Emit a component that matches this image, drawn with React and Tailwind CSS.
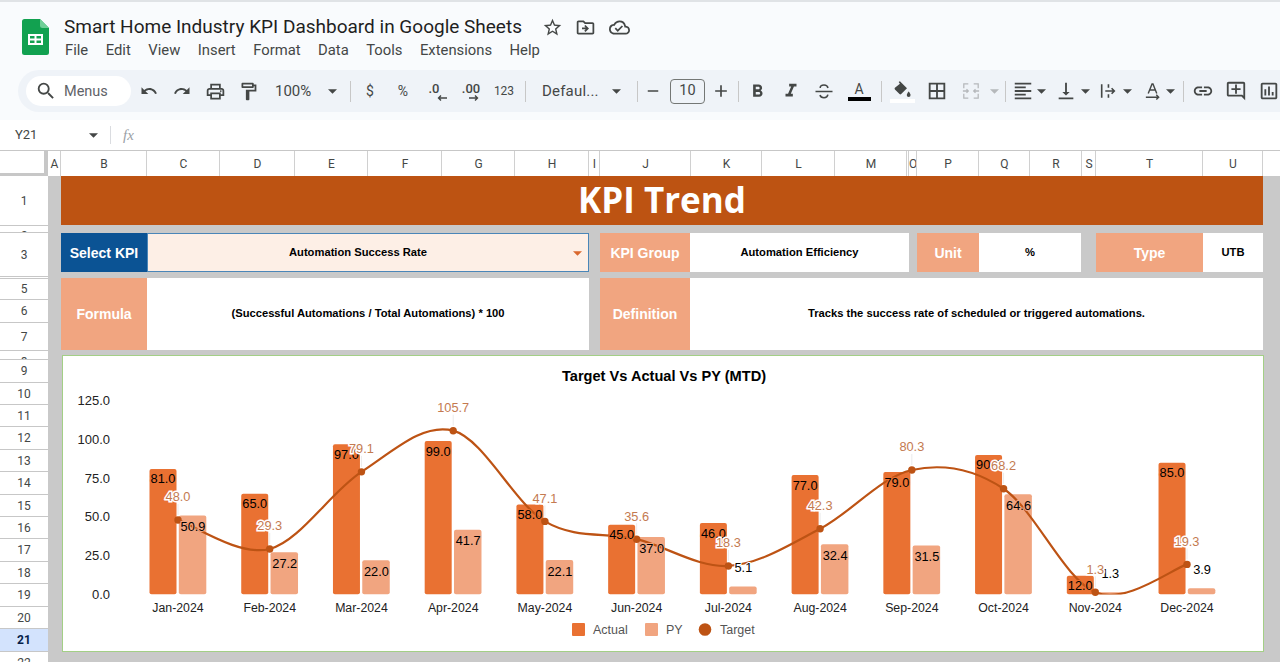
import React from 'react';
import {
  MdSearch, MdUndo, MdRedo, MdOutlineLocalPrintshop, MdOutlineFormatPaint, MdStarBorder,
  MdOutlineDriveFileMove, MdOutlineCloudDone, MdRemove, MdAdd, MdFormatBold, MdFormatItalic,
  MdBorderAll, MdFormatAlignLeft, MdVerticalAlignBottom, MdLink,
  MdOutlineAddComment, MdOutlineInsertChart,
} from 'react-icons/md';

const menus = ['File', 'Edit', 'View', 'Insert', 'Format', 'Data', 'Tools', 'Extensions', 'Help'];

const columns = [
  ['A', 'w-[13px]'], ['B', 'w-[86px]'], ['C', 'w-[73px]'], ['D', 'w-[75px]'], ['E', 'w-[73px]'],
  ['F', 'w-[74px]'], ['G', 'w-[73px]'], ['H', 'w-[74px]'], ['I', 'w-[11px]'], ['J', 'w-[91px]'],
  ['K', 'w-[71px]'], ['L', 'w-[73px]'], ['M', 'w-[72px]'], ['', 'w-[2px]'], ['O', 'w-[8px]'],
  ['P', 'w-[62px]'], ['Q', 'w-[51px]'], ['R', 'w-[52px]'], ['S', 'w-[14px]'], ['T', 'w-[107px]'],
  ['U', 'w-[60px]'],
];

const rows = [
  ['1', 'h-[50px]', 'items-center'], ['2', 'h-[7px]', 'items-start pt-[4px]'], ['3', 'h-[44px]', 'items-center'],
  ['4', 'h-[2px]', 'items-start'], ['5', 'h-[21px]', 'items-center'], ['6', 'h-[23px]', 'items-center'],
  ['7', 'h-[28px]', 'items-center'], ['8', 'h-[9px]', 'items-start pt-[5px]'], ['9', 'h-[23px]', 'items-center'],
  ['10', 'h-[22px]', 'items-center'], ['11', 'h-[22px]', 'items-center'], ['12', 'h-[23px]', 'items-center'],
  ['13', 'h-[22px]', 'items-center'], ['14', 'h-[23px]', 'items-center'], ['15', 'h-[22px]', 'items-center'],
  ['16', 'h-[22px]', 'items-center'], ['17', 'h-[23px]', 'items-center'], ['18', 'h-[22px]', 'items-center'],
  ['19', 'h-[23px]', 'items-center'], ['20', 'h-[22px]', 'items-center'], ['21', 'h-[23px]', 'items-center'],
  ['22', 'h-[11px]', 'items-start pt-[5px]'],
];

const chartData = [
  { m: 'Jan-2024', actual: 81, py: 50.9, target: 48 },
  { m: 'Feb-2024', actual: 65, py: 27.2, target: 29.3 },
  { m: 'Mar-2024', actual: 97, py: 22, target: 79.1 },
  { m: 'Apr-2024', actual: 99, py: 41.7, target: 105.7 },
  { m: 'May-2024', actual: 58, py: 22.1, target: 47.1 },
  { m: 'Jun-2024', actual: 45, py: 37, target: 35.6 },
  { m: 'Jul-2024', actual: 46, py: 5.1, target: 18.3 },
  { m: 'Aug-2024', actual: 77, py: 32.4, target: 42.3 },
  { m: 'Sep-2024', actual: 79, py: 31.5, target: 80.3 },
  { m: 'Oct-2024', actual: 90, py: 64.6, target: 68.2 },
  { m: 'Nov-2024', actual: 12, py: 1.3, target: 1.3 },
  { m: 'Dec-2024', actual: 85, py: 3.9, target: 19.3 },
];

const ACTUAL = '#e97132';
const PY = '#f1a580';
const TARGET = '#bd5314';
const BASE = 594.3;
const yOf = (v) => BASE - v * 1.548;
const xOf = (i) => 178 + i * 91.73;

function curvePath(pts) {
  let d = `M${pts[0][0]},${pts[0][1]}`;
  for (let i = 0; i < pts.length - 1; i++) {
    const p0 = pts[i - 1] || pts[i];
    const p1 = pts[i];
    const p2 = pts[i + 1];
    const p3 = pts[i + 2] || p2;
    const c1 = [p1[0] + (p2[0] - p0[0]) / 6, p1[1] + (p2[1] - p0[1]) / 6];
    const c2 = [p2[0] - (p3[0] - p1[0]) / 6, p2[1] - (p3[1] - p1[1]) / 6];
    d += ` C${c1[0]},${c1[1]} ${c2[0]},${c2[1]} ${p2[0]},${p2[1]}`;
  }
  return d;
}

const Caret = ({ className = '' }) => (
  <svg viewBox="0 0 10 5" className={`w-[9px] h-[5px] shrink-0 ${className}`}>
    <path d="M0 0h10L5 5z" fill="currentColor" />
  </svg>
);

const Slot = ({ className = '', children }) => (
  <div className={`w-6 h-6 shrink-0 flex items-center justify-center text-[#444746] ${className}`}>{children}</div>
);

const CaretSlot = ({ className = '' }) => (
  <div className={`w-3 h-6 shrink-0 flex items-center justify-center text-[#444746] ${className}`}>
    <Caret />
  </div>
);

const Sep = ({ className = '' }) => <div className={`w-px h-[21px] shrink-0 bg-[#c7c7c7] ${className}`} />;

const SheetsLogo = () => (
  <svg viewBox="0 0 27 36" className="w-[27px] h-[36px] shrink-0">
    <path d="M2.5 0H18l9 9v24.5a2.5 2.5 0 0 1-2.5 2.5h-22A2.5 2.5 0 0 1 0 33.5v-31A2.5 2.5 0 0 1 2.5 0z" fill="#12a150" />
    <path d="M18 0l9 9h-6.5A2.5 2.5 0 0 1 18 6.5z" fill="#6fcf97" />
    <path d="M6 15h15v11H6z M8 17v2.5h4.5V17z M14.5 17v2.5H19V17z M8 21.5V24h4.5v-2.5z M14.5 21.5V24H19v-2.5z" fill="#fff" fillRule="evenodd" />
  </svg>
);

const Toolbar = () => (
  <div className="ml-[18px] h-[42px] flex items-center rounded-l-full bg-[#eff3f8] text-[#444746] font-[Roboto,sans-serif]">
    <div className="ml-[8px] w-[105px] h-[30px] rounded-full bg-white flex items-center shrink-0">
      <MdSearch className="ml-[9px] text-[22px]" />
      <span className="ml-[7px] pt-[1px] text-[14.5px] text-[#5f6368]">Menus</span>
    </div>
    <Slot className="ml-[6px]"><MdUndo className="text-[18px]" /></Slot>
    <Slot className="ml-[9px]"><MdRedo className="text-[18px]" /></Slot>
    <Slot className="ml-[9px]"><MdOutlineLocalPrintshop className="text-[21px]" /></Slot>
    <Slot className="ml-[9px]"><MdOutlineFormatPaint className="text-[21px]" /></Slot>
    <span className="ml-[15px] pt-[1px] w-[40px] shrink-0 text-[15px]">100%</span>
    <CaretSlot className="ml-[11px]" />
    <Sep className="ml-[12px]" />
    <Slot className="ml-[7px] text-[14px]">$</Slot>
    <Slot className="ml-[9px] text-[14px]">%</Slot>
    <Slot className="ml-[9px]">
      <div className="relative w-6 h-6 text-[13px] font-medium leading-[20px] text-center pr-[4px]">
        .0
        <svg viewBox="0 0 10 6" className="absolute right-[1px] bottom-[2px] w-[10px] h-[6px]">
          <path d="M10 3H2M4 .5L1.5 3 4 5.5" fill="none" stroke="currentColor" strokeWidth="1.4" />
        </svg>
      </div>
    </Slot>
    <Slot className="ml-[11px]">
      <div className="relative w-6 h-6 text-[13px] font-medium leading-[20px] text-center">
        .00
        <svg viewBox="0 0 10 6" className="absolute right-[4px] bottom-[2px] w-[10px] h-[6px]">
          <path d="M0 3h8M6 .5L8.500 3 6 5.500" fill="none" stroke="currentColor" strokeWidth="1.4" />
        </svg>
      </div>
    </Slot>
    <Slot className="ml-[9px] text-[12px]">123</Slot>
    <Sep className="ml-[9px]" />
    <span className="ml-[16px] pt-[1px] w-[60px] shrink-0 text-[15px] tracking-[0.2px]">Defaul...</span>
    <CaretSlot className="ml-[8px]" />
    <Sep className="ml-[15px]" />
    <Slot className="ml-[3px]"><MdRemove className="text-[18px]" /></Slot>
    <div className="ml-[5px] w-[35px] h-[25px] shrink-0 rounded-[4px] border border-[#747775] flex items-center justify-center text-[14.5px]">10</div>
    <Slot className="ml-[4px]"><MdAdd className="text-[20px]" /></Slot>
    <Sep className="ml-[5px]" />
    <Slot className="ml-[6px]"><MdFormatBold className="text-[21px]" /></Slot>
    <Slot className="ml-[10px]"><MdFormatItalic className="text-[22px]" /></Slot>
    <Slot className="ml-[9px]">
      <svg viewBox="0 0 20 20" className="w-[20px] h-[20px]">
        <path d="M14 7c-.4-2-2-3-4-3s-3.800 1.200-3.800 3M1.500 10.500h17M6 14c.4 1.800 2 2.700 4 2.700s3.600-1.100 3.900-3" fill="none" stroke="currentColor" strokeWidth="1.500" />
      </svg>
    </Slot>
    <Slot className="ml-[11px]">
      <div className="flex flex-col items-center">
        <span className="text-[14px] leading-[16px]">A</span>
        <div className="w-[23px] h-[4px] bg-black" />
      </div>
    </Slot>
    <Sep className="ml-[10px]" />
    <Slot className="ml-[8px]">
      <div className="flex flex-col items-center mt-[1px]">
        <svg viewBox="0 0 24 20" className="w-[20px] h-[17px]">
          <path d="M8 1l1.500-1L18 8.500 11 15.500a1.500 1.500 0 0 1-2 0L3.500 10a1.500 1.500 0 0 1 0-2L9.500 3z" fill="#444746" />
          <path d="M20 12.500s2.300 2.700 2.300 4.200a2.300 2.300 0 0 1-4.600 0c0-1.500 2.300-4.200 2.300-4.200z" fill="#444746" />
        </svg>
        <div className="w-[25px] h-[4px] bg-white mt-[1px]" />
      </div>
    </Slot>
    <Slot className="ml-[11px]"><MdBorderAll className="text-[22px]" /></Slot>
    <Slot className="ml-[10px] text-[#b5b8bb]">
      <svg viewBox="0 0 20 20" className="w-[18px] h-[18px]">
        <path d="M2 7V2h5M13 2h5v5M2 13v5h5M13 18h5v-5" fill="none" stroke="#b5b8bb" strokeWidth="1.400" />
        <path d="M1 10h6M5 8l2 2-2 2M19 10h-6M15 8l-2 2 2 2" fill="none" stroke="#b5b8bb" strokeWidth="1.400" />
      </svg>
    </Slot>
    <div className="ml-[5px] w-3 h-6 shrink-0 flex items-center justify-center text-[#b5b8bb]"><Caret /></div>
    <Sep className="ml-[5px]" />
    <Slot className="ml-[5px]"><MdFormatAlignLeft className="text-[22px]" /></Slot>
    <CaretSlot />
    <Slot className="ml-[7px]"><MdVerticalAlignBottom className="text-[22px]" /></Slot>
    <CaretSlot className="ml-[1px]" />
    <Slot className="ml-[5px]">
      <svg viewBox="0 0 20 20" className="w-[18px] h-[18px]">
        <path d="M3 2.500v15M10.500 2.500v4M10.500 13.500v4M7 10h10M14 7l3 3-3 3" fill="none" stroke="currentColor" strokeWidth="1.800" />
      </svg>
    </Slot>
    <CaretSlot className="ml-[1px]" />
    <Slot className="ml-[7px]">
      <svg viewBox="0 0 20 20" className="w-[19px] h-[19px]">
        <path d="M5.500 12L9.500 2h1l4 10M7 8.500h6M3 16h13M14 13.500l2.500 2.500-2.500 2.500" fill="none" stroke="currentColor" strokeWidth="1.500" />
      </svg>
    </Slot>
    <CaretSlot />
    <Sep className="ml-[7px]" />
    <Slot className="ml-[7px]"><MdLink className="text-[22px]" /></Slot>
    <Slot className="ml-[9px]"><MdOutlineAddComment className="text-[22px]" /></Slot>
    <Slot className="ml-[9px]"><MdOutlineInsertChart className="text-[22px]" /></Slot>
  </div>
);

const Label = ({ className = '', children }) => (
  <div className={`h-full shrink-0 flex items-center justify-center bg-[#f1a580] text-white font-bold text-[14px] pt-[1px] ${className}`}>{children}</div>
);

const Value = ({ className = '', children }) => (
  <div className={`h-full shrink-0 flex items-center justify-center bg-white text-black font-bold text-[11.2px] pb-[1px] ${className}`}>{children}</div>
);

const Chart = () => {
  const pts = chartData.map((d, i) => [xOf(i), yOf(d.target)]);
  return (
    <svg viewBox="63 356 1200 295" className="w-full h-full font-['Liberation_Sans',Arial,sans-serif]">
      <clipPath id="plot"><rect x="62" y="380" width="1202" height="214.500" /></clipPath>
      <text x="664" y="381" textAnchor="middle" fontSize="14.600" fontWeight="700" fill="#000">Target Vs Actual Vs PY (MTD)</text>

      {[125, 100, 75, 50, 25, 0].map((v) => (
        <text key={v} x="110" y={yOf(v) + 4.500} textAnchor="end" fontSize="13" fill="#222">{v.toFixed(1)}</text>
      ))}

      {chartData.map((d, i) => (
        <g key={d.m}>
          <rect x={xOf(i) - 28.5} y={yOf(d.actual)} width="27" height={d.actual * 1.548} rx="2" fill={ACTUAL} />
          <rect x={xOf(i) + 0.8} y={yOf(d.py)} width="27.500" height={d.py * 1.548} rx="2" fill={PY} />
          <text x={xOf(i)} y="611.500" textAnchor="middle" fontSize="12.300" fill="#222">{d.m}</text>
        </g>
      ))}

      <path d={curvePath(pts)} fill="none" stroke={TARGET} strokeWidth="2.200" clipPath="url(#plot)" />
      {pts.map((p, i) => (
        <g key={i}>
          <line x1={p[0]} x2={p[0]} y1={p[1] - 5} y2={p[1] - 16} stroke="#e6e6e6" strokeWidth="0.800" />
          <circle cx={p[0]} cy={p[1]} r="3.700" fill={TARGET} />
        </g>
      ))}

      {chartData.map((d, i) => (
        <text key={d.m} x={xOf(i) - 15} y={yOf(d.actual) + 14.500} textAnchor="middle" fontSize="12.800" fill="#000"
          stroke={ACTUAL} strokeWidth="2" paintOrder="stroke">{d.actual.toFixed(1)}</text>
      ))}
      {chartData.map((d, i) => {
        const small = d.py < 10;
        return (
          <text key={d.m} x={xOf(i) + 15} y={small ? yOf(d.py) - 14.500 : yOf(d.py) + 15.500} textAnchor="middle" fontSize="12.800" fill="#000"
            stroke={small ? '#fff' : PY} strokeWidth="2" paintOrder="stroke">{d.py.toFixed(1)}</text>
        );
      })}
      {chartData.map((d, i) => (
        <text key={d.m} x={xOf(i)} y={yOf(d.target) - 18.500} textAnchor="middle" fontSize="12.800" fill="#c47a50"
          stroke="#fff" strokeWidth="3" paintOrder="stroke">{d.target.toFixed(1)}</text>
      ))}

      <rect x="572" y="623" width="13" height="13" rx="1" fill={ACTUAL} />
      <text x="593" y="634" fontSize="12.500" fill="#555">Actual</text>
      <rect x="645" y="623" width="13" height="13" rx="1" fill={PY} />
      <text x="666" y="634" fontSize="12.500" fill="#555">PY</text>
      <circle cx="705" cy="629.500" r="6.300" fill={TARGET} />
      <text x="720" y="634" fontSize="12.500" fill="#555">Target</text>
    </svg>
  );
};

export default function App() {
  return (
    <div className="w-[1280px] h-[662px] overflow-hidden flex flex-col bg-white font-['Liberation_Sans',Arial,sans-serif]">
      <div className="h-[2px] bg-[#e0e3e6]" />

      <div className="h-[68px] bg-[#f9fbfd] flex items-start">
        <div className="ml-[22px] mt-[17px]"><SheetsLogo /></div>
        <div className="ml-[15px] mt-[13px] flex flex-col font-[Roboto,sans-serif]">
          <div className="flex items-center h-6">
            <span className="text-[19px] text-[#1f1f1f] w-[460px] whitespace-nowrap">Smart Home Industry KPI Dashboard in Google Sheets</span>
            <MdStarBorder className="ml-[18px] text-[21px] text-[#444746]" />
            <MdOutlineDriveFileMove className="ml-[12px] text-[21px] text-[#444746]" />
            <MdOutlineCloudDone className="ml-[13px] text-[21px] text-[#444746]" />
          </div>
          <div className="mt-[1px] ml-[1px] flex items-center h-5 gap-[17.500px] text-[14.800px] text-[#444746]">
            {menus.map((m) => <span key={m}>{m}</span>)}
          </div>
        </div>
      </div>

      <div className="h-[50px] shrink-0 bg-[#f9fbfd]"><Toolbar /></div>

      <div className="h-[30px] shrink-0 bg-white flex items-center text-[#444746]">
        <span className="ml-[15px] w-[72px] text-[13px] font-[Roboto,sans-serif]">Y21</span>
        <Caret className="ml-[2px]" />
        <div className="ml-[12px] w-px h-[18px] bg-[#dadce0]" />
        <span className="ml-[12px] text-[15px] italic font-['Liberation_Serif',serif] text-[#9aa0a6]">fx</span>
      </div>

      <div className="h-[26px] shrink-0 flex border-t border-[#c7c7c7] bg-white font-[Roboto,sans-serif] text-[12px] text-[#444746]">
        <div className="w-[48px] shrink-0 border-r-[4px] border-b-[3px] border-[#c7c7c7]" />
        {columns.map(([name, w], i) => (
          <div key={i} className={`${w} shrink-0 flex items-center justify-center pl-[1px] border-r border-[#d0d0d0] overflow-hidden`}>{name}</div>
        ))}
      </div>

      <div className="flex-1 flex min-h-0 bg-[#c9c9c9]">
        <div className="w-[48px] shrink-0 flex flex-col bg-white font-[Roboto,sans-serif] text-[12px] text-[#444746]">
          {rows.map(([n, h, align]) => (
            <div key={n} className={`${h} shrink-0 flex ${align} justify-center overflow-hidden border-b border-[#c7c7c7] leading-none ${n === '21' ? 'bg-[#d3e3fd] font-bold text-[#041e49]' : ''}`}>{n}</div>
          ))}
        </div>

        <div className="w-[1202px] ml-[13px] shrink-0 flex flex-col text-black">
          <div className="h-[49px] shrink-0 bg-[#bd5312] flex items-center justify-center pb-[1px] text-white text-[35px] font-bold font-['Open_Sans',sans-serif]">KPI Trend</div>

          <div className="mt-[8px] h-[39px] shrink-0 flex">
            <div className="w-[86px] h-full shrink-0 flex items-center justify-center pt-[1px] bg-[#0b5394] text-white font-bold text-[14px]">Select KPI</div>
            <div className="relative w-[442px] h-full shrink-0 flex items-center justify-center pr-[20px] bg-[#fdefe6] border border-[#4a86b8] font-bold text-[11.200px] pb-[1px]">
              Automation Success Rate
              <Caret className="absolute right-[6px] top-[17px] text-[#d9682e]" />
            </div>
            <Label className="ml-[11px] w-[90px]">KPI Group</Label>
            <Value className="w-[219px]">Automation Efficiency</Value>
            <Label className="ml-[8px] w-[62px]">Unit</Label>
            <Value className="w-[102px]">%</Value>
            <Label className="ml-[15px] w-[107px]">Type</Label>
            <Value className="w-[60px]">UTB</Value>
          </div>

          <div className="mt-[6px] h-[72px] shrink-0 flex">
            <Label className="w-[86px]">Formula</Label>
            <Value className="w-[442px]">(Successful Automations / Total Automations) * 100</Value>
            <Label className="ml-[11px] w-[90px]">Definition</Label>
            <Value className="w-[573px]">Tracks the success rate of scheduled or triggered automations.</Value>
          </div>

          <div className="mt-[5px] h-[297px] shrink-0 ml-[1px] -mr-px border border-[#a3cf86] bg-white">
            <Chart />
          </div>
        </div>
      </div>
    </div>
  );
}
